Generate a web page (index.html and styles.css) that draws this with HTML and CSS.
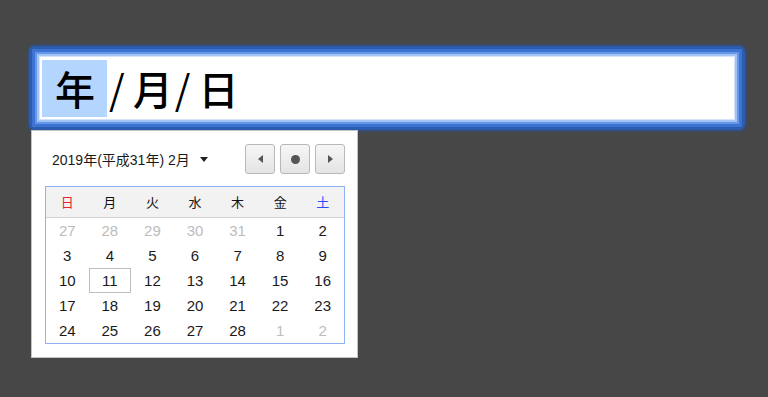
FILE: index.html
```html
<!DOCTYPE html>
<html lang="ja">
<head>
  <meta charset="UTF-8">
  <title>日付の入力</title>
  <link rel="stylesheet" href="styles.css">
</head>
<body>
  <div class="picker">
    <div class="field">
      <span class="seg sel">年</span>
      <span class="sep">/</span>
      <span class="seg">月</span>
      <span class="sep">/</span>
      <span class="seg">日</span>
    </div>

    <div class="popup">
      <div class="head">
        <div class="month">2019年(平成31年) 2月 <span class="caret"></span></div>
        <div class="navs">
          <button class="nav"><span class="tri-l"></span></button>
          <button class="nav"><span class="dot"></span></button>
          <button class="nav"><span class="tri-r"></span></button>
        </div>
      </div>

      <div class="cal">
        <div class="week">
          <span class="sun">日</span><span>月</span><span>火</span><span>水</span><span>木</span><span>金</span><span class="sat">土</span>
        </div>
        <div class="days">
          <span class="out">27</span><span class="out">28</span><span class="out">29</span><span class="out">30</span><span class="out">31</span><span>1</span><span>2</span>
          <span>3</span><span>4</span><span>5</span><span>6</span><span>7</span><span>8</span><span>9</span>
          <span>10</span><span class="today">11</span><span>12</span><span>13</span><span>14</span><span>15</span><span>16</span>
          <span>17</span><span>18</span><span>19</span><span>20</span><span>21</span><span>22</span><span>23</span>
          <span>24</span><span>25</span><span>26</span><span>27</span><span>28</span><span class="out">1</span><span class="out">2</span>
        </div>
      </div>
    </div>
  </div>
</body>
</html>
```

FILE: styles.css
```css
body {
  margin: 0;
  background: #474747;
  font-family: "Liberation Sans", "Noto Sans CJK JP", sans-serif;
  color: #222;
}
.picker {
  margin: 46px 0 0 29px;
  width: 716px;
}
.field {
  box-sizing: border-box;
  height: 84px;
  border: 3px solid #2b5cae;
  border-radius: 6px;
  background: #fff;
  box-shadow: 0 0 3px 1px rgba(40, 85, 170, .75),
    inset 0 0 0 3px #3c73d4,
    inset 0 0 0 5px #6698e8,
    inset 0 0 0 7px #a2c3f3,
    inset 0 0 0 8px #d3e3fa;
  padding: 11px 0 0 10px;
  display: flex;
  align-items: flex-start;
  font-family: "Noto Sans CJK JP", sans-serif;
  font-size: 40px;
  font-weight: 500;
  color: #000;
}
.seg, .sep {
  height: 57px;
  line-height: 57px;
}
.sel {
  background: #b4d5fe;
  padding: 0 12px 0 13px;
}
.sep {
  padding: 0 8px 0 2px;
  font-weight: 400;
}
.popup {
  margin-left: 2px;
  width: 327px;
  height: 228px;
  box-sizing: border-box;
  background: #fff;
  border: 1px solid #c4c4c4;
  padding: 13px 12px 0 13px;
}
.head {
  display: flex;
  justify-content: space-between;
  align-items: center;
  height: 30px;
  margin-bottom: 12px;
}
.month {
  padding-left: 7px;
  font-size: 14px;
  display: flex;
  align-items: center;
  color: #1a1a1a;
}
.caret {
  margin-left: 10px;
  border-left: 4px solid transparent;
  border-right: 4px solid transparent;
  border-top: 5px solid #222;
}
.navs {
  display: flex;
  gap: 5px;
}
.nav {
  width: 30px;
  height: 30px;
  padding: 0;
  border: 1px solid #b8b8b8;
  border-radius: 3px;
  background: linear-gradient(#f6f6f6, #e4e4e4);
  display: flex;
  align-items: center;
  justify-content: center;
}
.tri-l {
  border-top: 4px solid transparent;
  border-bottom: 4px solid transparent;
  border-right: 5px solid #555;
}
.tri-r {
  border-top: 4px solid transparent;
  border-bottom: 4px solid transparent;
  border-left: 5px solid #555;
}
.dot {
  width: 9px;
  height: 9px;
  border-radius: 50%;
  background: #555;
}
.cal {
  border: 1px solid #8db3f4;
  width: 300px;
  box-sizing: border-box;
}
.week, .days {
  display: grid;
  grid-template-columns: repeat(7, 1fr);
  text-align: center;
}
.week {
  background: #f2f2f2;
  border-bottom: 1px solid #d2d2d2;
  height: 30px;
  line-height: 30px;
  font-family: "Noto Sans CJK JP", sans-serif;
  font-size: 13px;
  color: #111;
}
.week .sun { color: #f0202e; }
.week .sat { color: #2a4cff; }
.days span {
  height: 25px;
  line-height: 25px;
  font-size: 15px;
  color: #1a1a1a;
  box-sizing: border-box;
}
.days .out { color: #bcbcbc; }
.days .today {
  border: 1px solid #bdbdbd;
  line-height: 23px;
}
```
